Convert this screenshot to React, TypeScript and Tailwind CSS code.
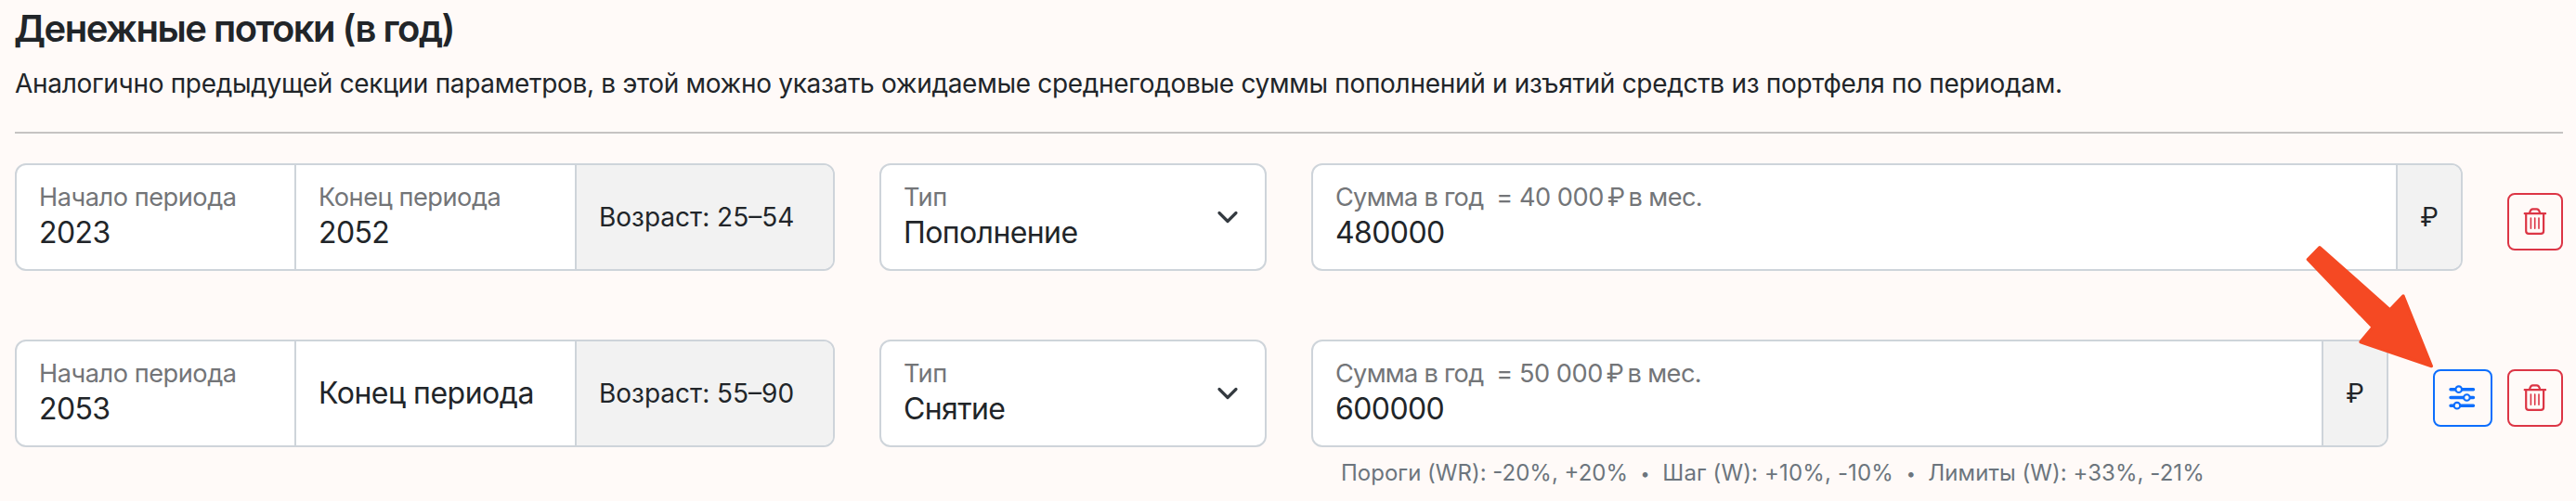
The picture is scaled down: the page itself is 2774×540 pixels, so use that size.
import type { ReactNode } from "react";

function Field({ label, value }: { label: ReactNode; value: string }) {
  return (
    <div className="flex flex-col pt-4 pl-6 whitespace-pre">
      <span className="h-[37px] text-[27.2px] leading-[38px] tracking-[-0.48px] text-[#737578]">{label}</span>
      <span className="text-[32px] leading-10 tracking-[-0.6px] text-[#212529]">{value}</span>
    </div>
  );
}

function Addon({ children, className }: { children: ReactNode; className: string }) {
  return (
    <div className={`flex items-center border-l-2 border-[#ced4da] bg-[#f2f2f2] text-[28px] leading-10 whitespace-pre text-[#212529] ${className}`}>
      <span>{children}</span>
    </div>
  );
}

function TrashButton() {
  return (
    <button className="mt-8 h-[62px] w-[60px] shrink-0 rounded-lg border-2 border-[#dc3545] text-[#dc3545]">
      <svg viewBox="2 2 56 58" className="h-[58px] w-14" fill="none" stroke="currentColor" strokeWidth="2.2" strokeLinecap="round" strokeLinejoin="round">
        <path d="M18.7 22.2H41.1M24 21.7C24.6 18.8 25.6 17.3 27.6 17.3H31.5C33.5 17.3 34.6 18.8 35.2 21.7" />
        <path d="M20.2 22.5V41C20.2 42.8 21.2 43.8 23 43.8H36.3C38.1 43.8 39.1 42.8 39.1 41V22.5" />
        <path d="M25.4 27V38.3M29.7 27V38.3M34 27V38.3" strokeWidth="1.6" />
      </svg>
    </button>
  );
}

function SettingsButton() {
  return (
    <button className="mt-8 h-[62px] w-16 shrink-0 rounded-lg border-2 border-[#0d6efd] text-[#0d6efd]">
      <svg viewBox="2 2 60 58" className="h-[58px] w-[60px]" fill="none" stroke="currentColor" strokeWidth="3.4" strokeLinecap="round">
        <path d="M19 21.7H43.5M19 30.5H43.5M19 39.2H43.5" />
        <g fill="#fffaf8" strokeWidth="2.1">
          <circle cx="27.7" cy="21.7" r="3.3" />
          <circle cx="36.4" cy="30.5" r="3.3" />
          <circle cx="25.9" cy="39.2" r="3.3" />
        </g>
      </svg>
    </button>
  );
}

function Bullet() {
  return <span className="inline-block w-[10px] text-center align-[1px] text-[18px] leading-none">•</span>;
}

type Flow = { start: string; end?: string; age: string; type: string; monthly: string; amount: string; adjustable?: boolean };

const flows: Flow[] = [
  { start: "2023", end: "2052", age: "25–54", type: "Пополнение", monthly: "40 000", amount: "480000" },
  { start: "2053", age: "55–90", type: "Снятие", monthly: "50 000", amount: "600000", adjustable: true },
];

function FlowRow({ flow }: { flow: Flow }) {
  return (
    <div className="flex h-[116px]">
      <div className="mr-12 flex w-[883px] shrink-0 overflow-hidden rounded-xl border-2 border-[#ced4da] bg-white">
        <div className="w-[299px] shrink-0">
          <Field label="Начало периода" value={flow.start} />
        </div>
        <div className="w-[302px] shrink-0 border-l-2 border-[#ced4da]">
          {flow.end ? (
            <Field label="Конец периода" value={flow.end} />
          ) : (
            <div className="flex h-full items-center pl-6 text-[32px] leading-10 tracking-[-0.5px] text-[#212529]">Конец периода</div>
          )}
        </div>
        <Addon className="flex-1 pl-6">Возраст: {flow.age}</Addon>
      </div>
      <div className="mr-12 flex w-[417px] shrink-0 justify-between rounded-xl border-2 border-[#ced4da] bg-white">
        <Field label="Тип" value={flow.type} />
        <svg viewBox="0 0 24 24" className="mt-11 mr-7 size-6" fill="none" stroke="#343a40" strokeWidth="3.2" strokeLinecap="round" strokeLinejoin="round">
          <path d="M3 7.5L12 16.5L21 7.5" />
        </svg>
      </div>
      <div className="mr-12 flex flex-1 overflow-hidden rounded-xl border-2 border-[#ced4da] bg-white">
        <div className="flex-1">
          <Field
            label={
              <>
                <span className="tracking-[-0.75px]">Сумма в год{"  "}</span>= {flow.monthly}
                <span className="ml-1 tracking-[-3.5px]">₽</span>
                <span className="tracking-[-0.6px]"> в мес.</span>
              </>
            }
            value={flow.amount}
          />
        </div>
        <Addon className="w-[70px] shrink-0 justify-center">₽</Addon>
      </div>
      <div className="flex gap-4">
        {flow.adjustable && <SettingsButton />}
        <TrashButton />
      </div>
    </div>
  );
}

export default function App() {
  return (
    <main className="relative h-[540px] w-[2774px] overflow-hidden bg-[#fffaf8] pt-[7px] pr-[14px] pl-4 font-['Inter','Liberation_Sans',sans-serif] text-[#212529]">
      <h2 className="-ml-px h-[63px] text-[40px] leading-12 font-semibold tracking-[-1.5px]">Денежные потоки (в год)</h2>
      <p className="h-[72px] text-[28px] leading-10 tracking-[-0.31px]">
        Аналогично предыдущей секции параметров, в этой можно указать ожидаемые среднегодовые суммы пополнений и изъятий средств из портфеля по периодам.
      </p>
      <hr className="h-0.5 border-0 bg-[#c5c3c2]" />
      <div className="mt-8 flex flex-col gap-[74px]">
        {flows.map((flow) => (
          <FlowRow key={flow.start} flow={flow} />
        ))}
      </div>
      <p className="mt-2.5 ml-[1428px] text-[24px] leading-9 whitespace-pre text-[#6c757d]">
        Пороги (WR): -20%, +20%{"  "}
        <Bullet />
        <span className="tracking-[0.14px]">{"  "}Шаг (W): +10%, -10%{"  "}</span>
        <Bullet />
        <span className="tracking-[0.05px]">{"  "}Лимиты (W): +33%, -21%</span>
      </p>
      <svg viewBox="0 0 420 408" className="absolute top-[260px] left-[2480px] h-[136px] w-[140px] overflow-visible" fill="#f54923" stroke="#f54923" strokeWidth="10" strokeLinejoin="round">
        <path d="M54 20L281 222L324 177L415 404L186 326L226 278L16 59Z" />
      </svg>
    </main>
  );
}
